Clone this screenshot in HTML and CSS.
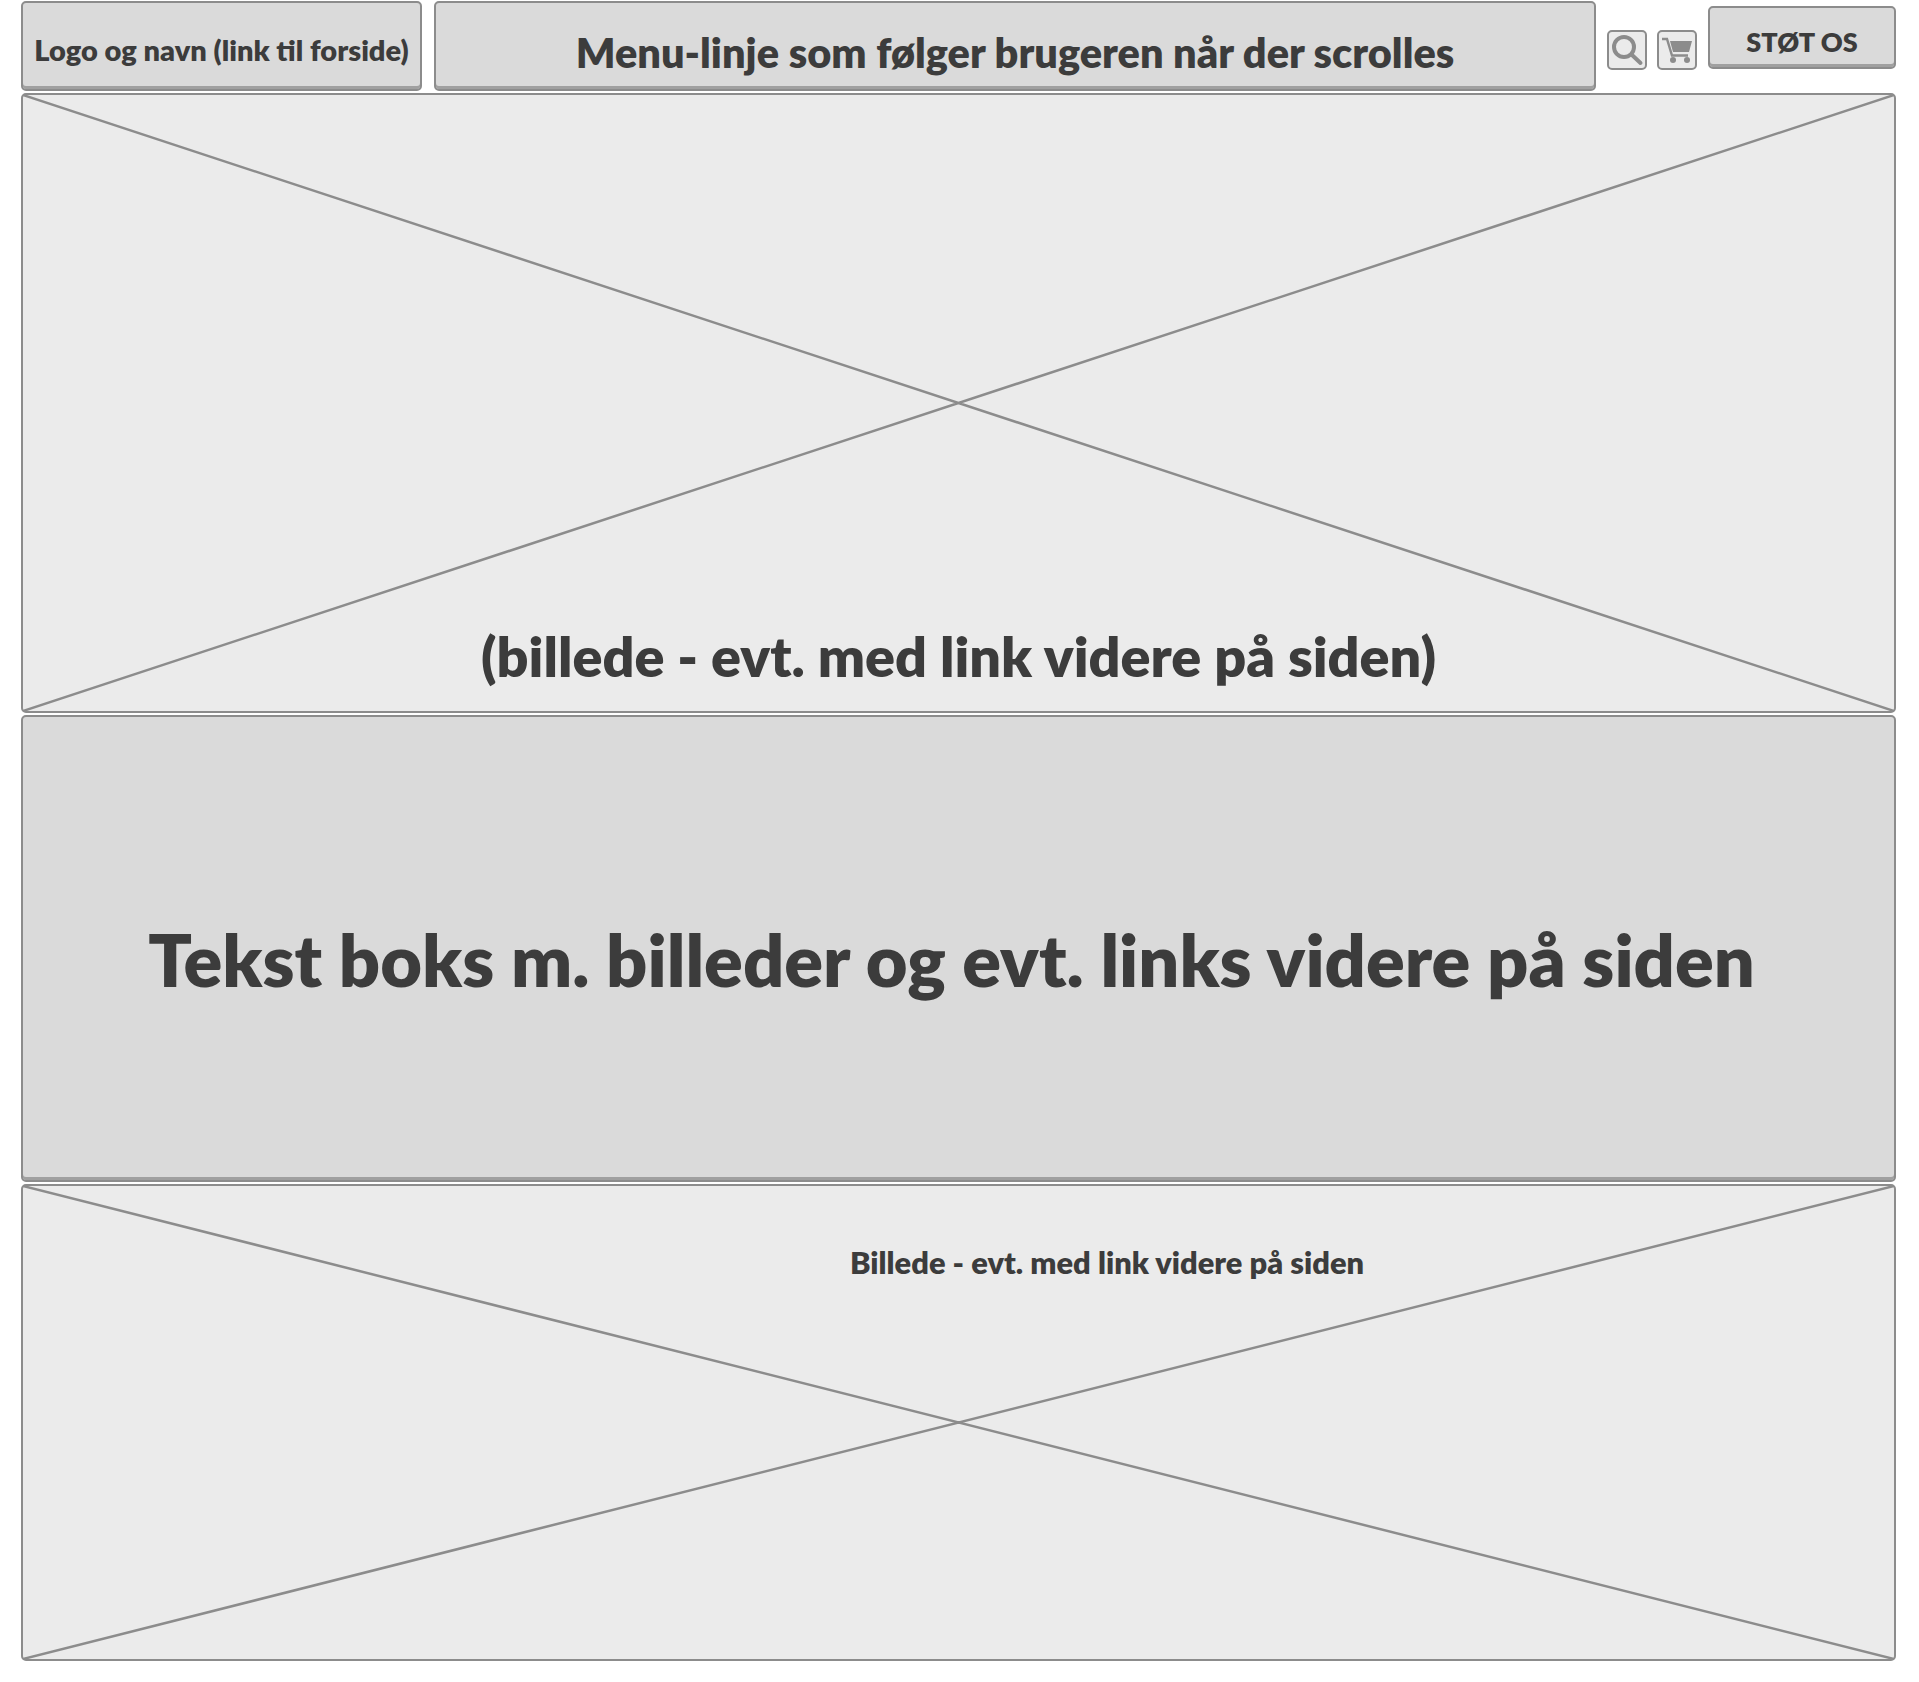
FILE: index.html
```html
<!DOCTYPE html>
<html lang="da">
<head>
<meta charset="utf-8">
<title>Wireframe</title>
<link rel="stylesheet" href="styles.css">
</head>
<body>
<div class="page">
  <header class="top">
    <a class="box logo">Logo og navn (link til forside)</a>
    <nav class="box menu">Menu-linje som følger brugeren når der scrolles</nav>
    <div class="tools">
      <span class="icon-btn">
        <svg viewBox="0 0 36 36" width="36" height="36" fill="none" stroke="#8c8c8c">
          <circle cx="15" cy="15" r="10" stroke-width="4"/>
          <path d="M22.500 22.500l9 8.500" stroke-width="4" stroke-linecap="round"/>
        </svg>
      </span>
      <span class="icon-btn">
        <svg viewBox="0 0 36 36" width="36" height="36" fill="none" stroke="#8c8c8c">
          <path d="M3 7h5l5 16.500h16" stroke-width="2.400"/>
          <path d="M11 9h22l-3 11h-16z" fill="#8c8c8c" stroke="none"/>
          <circle cx="14" cy="28" r="3" fill="#8c8c8c" stroke="none"/>
          <circle cx="28" cy="28" r="3" fill="#8c8c8c" stroke="none"/>
        </svg>
      </span>
    </div>
    <a class="box support">STØT OS</a>
  </header>
  <section class="placeholder hero">
    <svg class="cross" viewBox="0 0 100 100" preserveAspectRatio="none"><path d="M0 0L100 100M100 0L0 100" vector-effect="non-scaling-stroke"/></svg>
    <p class="hero-label">(billede - evt. med link videre på siden)</p>
  </section>
  <section class="box textbox">Tekst boks m. billeder og evt. links videre på siden</section>
  <section class="placeholder lower">
    <svg class="cross" viewBox="0 0 100 100" preserveAspectRatio="none"><path d="M0 0L100 100M100 0L0 100" vector-effect="non-scaling-stroke"/></svg>
    <p class="lower-label">Billede - evt. med link videre på siden</p>
  </section>
</div>
</body>
</html>
```
FILE: styles.css
```css
* { box-sizing: border-box; }
html, body { margin: 0; background: #fff; }
body { font-family: "Lato", "Noto Sans", sans-serif; font-weight: 800; color: #3c3c3c; }
.page { width: 1919px; height: 1682px; padding: 1px 23px 0 21px; display: flex; flex-direction: column; gap: 2px; }
.top { display: flex; align-items: flex-start; height: 90px; }
.box {
  display: flex; align-items: center; justify-content: center;
  background: #dadada; border: 2px solid #8c8c8c; border-radius: 5px;
  box-shadow: inset 0 -3px 0 #a0a0a0;
  white-space: nowrap;
}
.logo { width: 401px; height: 90px; font-size: 29px; padding-top: 7px; }
.menu { width: 1162px; height: 90px; margin-left: 12px; font-size: 41.500px; padding-top: 12px; }
.tools { display: flex; gap: 10px; margin: 29px 11px 0; }
.icon-btn { width: 40px; height: 40px; border: 2px solid #8c8c8c; border-radius: 5px; background: #ebebeb; display: flex; align-items: center; justify-content: center; }
.icon-btn svg { display: block; flex: none; }
.support { width: 188px; height: 63px; margin-top: 5px; font-size: 27px; padding-top: 8px; }
.placeholder { position: relative; background: #ebebeb; border: 2px solid #8c8c8c; border-radius: 5px; }
.cross { position: absolute; inset: 0; width: 100%; height: 100%; }
.cross path { fill: none; stroke: #8c8c8c; stroke-width: 2.500px; }
.hero { height: 620px; display: flex; flex-direction: column; justify-content: flex-end; align-items: center; }
.hero-label { position: relative; margin: 0 0 18px; font-size: 55.700px; line-height: 74px; }
.textbox { height: 467px; font-size: 72px; padding: 20px 14px 0 0; }
.lower { height: 477px; }
.lower-label { position: relative; margin: 0; padding: 57px 0 0 827px; font-size: 30.800px; line-height: 40px; white-space: nowrap; }
```
